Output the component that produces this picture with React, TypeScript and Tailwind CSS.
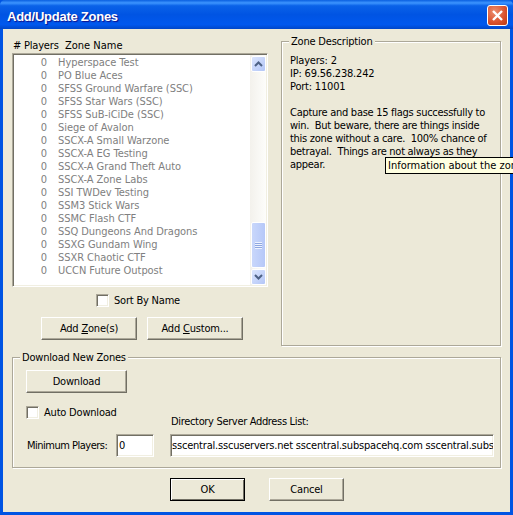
import React from "react"

const ZONES = [
  "Hyperspace Test",
  "PO Blue Aces",
  "SFSS Ground Warfare (SSC)",
  "SFSS Star Wars (SSC)",
  "SFSS SuB-iCiDe (SSC)",
  "Siege of Avalon",
  "SSCX-A Small Warzone",
  "SSCX-A EG Testing",
  "SSCX-A Grand Theft Auto",
  "SSCX-A Zone Labs",
  "SSI TWDev Testing",
  "SSM3 Stick Wars",
  "SSMC Flash CTF",
  "SSQ Dungeons And Dragons",
  "SSXG Gundam Wing",
  "SSXR Chaotic CTF",
  "UCCN Future Outpost",
]

const raised =
  "border border-t-white border-l-white border-r-[#716f64] border-b-[#716f64] shadow-[inset_-1px_-1px_0_#aca899]"
const sunken =
  "border p-[1px] border-t-[#aca899] border-l-[#aca899] border-r-white border-b-white shadow-[inset_1px_1px_0_#716f64,inset_-1px_-1px_0_#f1efe2]"

function Button({ className, children }: { className: string; children: React.ReactNode }) {
  return (
    <button className={`flex items-center justify-center bg-[#ece9d8] ${raised} ${className}`}>
      {children}
    </button>
  )
}

function Checkbox() {
  return <span className={`block h-[13px] w-[13px] shrink-0 bg-white ${sunken}`} />
}

function Legend({ children }: { children: React.ReactNode }) {
  return (
    <span className="absolute left-[7px] top-[-7px] bg-[#ece9d8] px-[2px] leading-[14px]">{children}</span>
  )
}

function ScrollButton({ up }: { up?: boolean }) {
  return (
    <div className="flex h-[16px] w-[15px] items-center justify-center rounded-[2px] border border-white bg-[linear-gradient(135deg,#dbe5fd,#b3c6f7)]">
      <svg width="9" height="6" viewBox="0 0 9 6">
        <path
          d={up ? "M1 5 L4.5 1.5 L8 5" : "M1 1 L4.5 4.5 L8 1"}
          fill="none"
          stroke="#4d6185"
          strokeWidth="2"
        />
      </svg>
    </div>
  )
}

export default function App() {
  return (
    <div
      className="relative flex h-[515px] w-[513px] flex-col overflow-hidden bg-[#0054e3] text-[11px] leading-[13px] tracking-[-0.2px] text-black"
      style={{ fontFamily: '"DejaVu Sans Condensed", "DejaVu Sans", sans-serif' }}
    >
      {/* Title bar */}
      <div className="flex h-[29px] shrink-0 items-center justify-between rounded-t-[5px] bg-[linear-gradient(180deg,#0a5fe0_0%,#3d95ff_10%,#0a62e8_20%,#0054e3_50%,#0058ee_85%,#0046c8_100%)] pl-[7px] pr-[5px]">
        <span
          className="pt-[3px] text-[13px] font-bold tracking-[-0.25px] text-white"
          style={{ fontFamily: '"Liberation Sans", Arial, sans-serif', textShadow: "1px 1px 1px #0f1089" }}
        >
          Add/Update Zones
        </span>
        <div className="mt-[2px] flex h-[21px] w-[21px] items-center justify-center rounded-[3px] border border-white bg-[radial-gradient(circle_at_35%_30%,#ec8f70,#d9502c_60%,#b93a14)]">
          <svg width="13" height="13" viewBox="0 0 13 13">
            <path d="M2 2 L11 11 M11 2 L2 11" stroke="white" strokeWidth="2.4" />
          </svg>
        </div>
      </div>

      {/* Client area */}
      <div className="mx-[3px] mb-[3px] flex flex-1 flex-col bg-[#ece9d8] px-[9px]">
        <div className="flex">
          {/* Left column */}
          <div className="flex w-[256px] shrink-0 flex-col">
            <div className="mt-[9px] flex h-[15px] items-center pl-[1px]">
              <span className="w-[52px]"># Players</span>
              <span className="tracking-normal">Zone Name</span>
            </div>
            <div className={`flex h-[234px] w-[256px] bg-white ${sunken}`}>
              <div className="flex-1 pt-[1px] tracking-[-0.05px]">
                {ZONES.map((zone) => (
                  <div key={zone} className="flex h-[13px] items-center text-[#808080]">
                    <span className="w-[44px] pr-[11px] text-right">0</span>
                    <span className="whitespace-nowrap">{zone}</span>
                  </div>
                ))}
              </div>
              <div className="flex w-[16px] shrink-0 flex-col bg-[linear-gradient(90deg,#f3f1ec,#fdfdfb)] pl-[1px] pt-[1px]">
                <ScrollButton up />
                <div className="flex-1" />
                <div className="mb-[1px] flex h-[46px] w-[15px] items-center justify-center rounded-[2px] border border-white bg-[linear-gradient(90deg,#c9d7fb,#b6c8f8)]">
                  <div className="h-[7px] w-[7px] bg-[repeating-linear-gradient(180deg,#eef3ff_0,#eef3ff_1px,#8ea6e0_1px,#8ea6e0_2px)]" />
                </div>
                <ScrollButton />
              </div>
            </div>
            <div className="mt-[6px] flex h-[14px] items-center pl-[84px]">
              <Checkbox />
              <span className="ml-[5px]">Sort By Name</span>
            </div>
            <div className="mt-[10px] flex gap-[10px] pl-[29px]">
              <Button className="h-[23px] w-[96px]">
                <span>
                  Add <u>Z</u>one(s)
                </span>
              </Button>
              <Button className="h-[23px] w-[96px]">
                <span>
                  Add <u>C</u>ustom...
                </span>
              </Button>
            </div>
          </div>

          {/* Zone description */}
          <div className="relative ml-[13px] mt-[12px] h-[305px] w-[220px] border border-[#aca899] shadow-[inset_1px_1px_0_white,1px_1px_0_white]">
            <Legend>Zone Description</Legend>
            <div className="px-[8px] pt-[12px]">
              <p>Players: 2</p>
              <p>IP: 69.56.238.242</p>
              <p>Port: 11001</p>
              <p className="mt-[13px] whitespace-pre-wrap tracking-[-0.28px]">
                {"Capture and base 15 flags successfully to win.  But beware, there are things inside this zone without a care.  100% chance of betrayal.  Things are not always as they appear."}
              </p>
            </div>
          </div>
        </div>

        {/* Download group */}
        <div className="relative mt-[11px] h-[111px] w-[489px] border border-[#aca899] shadow-[inset_1px_1px_0_white,1px_1px_0_white]">
          <Legend>Download New Zones</Legend>
          <div className="flex items-end pl-[13px] pt-[12px]">
            <div className="flex w-[144px] flex-col">
              <Button className="h-[23px] w-[101px]">Download</Button>
              <div className="mt-[12px] flex h-[14px] items-center">
                <Checkbox />
                <span className="ml-[5px]">Auto Download</span>
              </div>
              <div className="mt-[15px] flex items-center">
                <span className="ml-[1px] w-[89px] tracking-[-0.5px]">Minimum Players:</span>
                <div className={`flex h-[23px] w-[38px] items-center bg-white pl-[2px] ${sunken}`}>0</div>
              </div>
            </div>
            <div className="flex flex-col">
              <span className="mb-[6px] ml-[1px] h-[13px] tracking-[-0.33px]">Directory Server Address List:</span>
              <div className={`flex h-[23px] w-[324px] items-center overflow-hidden whitespace-nowrap bg-white pl-[1px] ${sunken}`}>
                sscentral.sscuservers.net sscentral.subspacehq.com sscentral.subs
              </div>
            </div>
          </div>
        </div>

        {/* Dialog buttons */}
        <div className="mt-[10px] flex gap-[24px] pl-[158px]">
          <button className="flex h-[23px] w-[75px] items-center justify-center border border-black bg-[#ece9d8] shadow-[inset_1px_1px_0_white,inset_-1px_-1px_0_#716f64]">
            OK
          </button>
          <Button className="h-[23px] w-[75px]">Cancel</Button>
        </div>
      </div>

      {/* Tooltip */}
      <div className="absolute left-[385px] top-[157px] flex h-[17px] w-[128px] items-center overflow-hidden whitespace-nowrap border border-r-0 border-black bg-[#ffffe1] pl-[2px] tracking-normal">
        Information about the zon
      </div>
    </div>
  )
}
